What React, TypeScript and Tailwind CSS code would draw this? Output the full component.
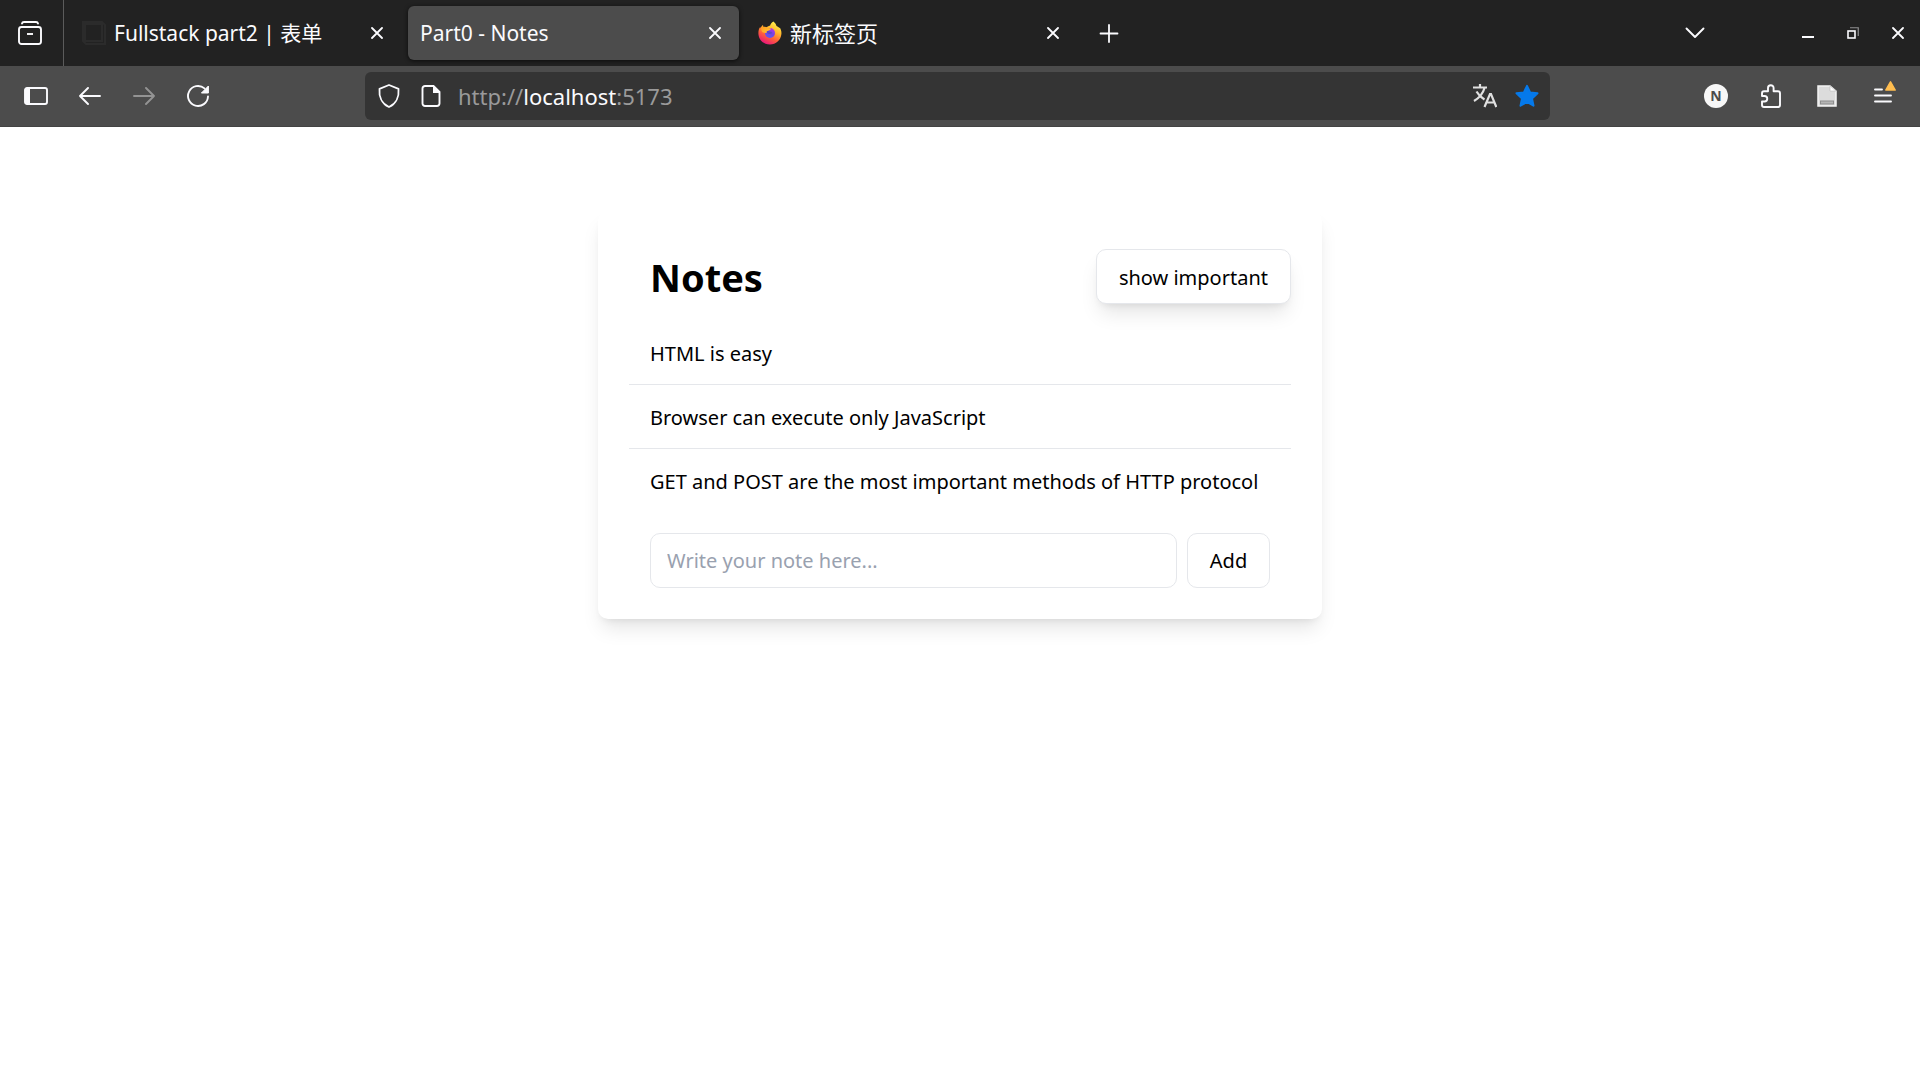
import { useState, type FormEvent, type ReactNode } from "react";

const UI = 'font-["Noto_Sans","Noto_Sans_CJK_SC",sans-serif]';

function CloseIcon() {
  return (
    <svg width="12" height="12" viewBox="0 0 12 12" fill="none" stroke="currentColor" strokeWidth="1.8" strokeLinecap="round">
      <path d="M1 1 11 11M11 1 1 11" />
    </svg>
  );
}

function FirefoxIcon() {
  return (
    <svg className="shrink-0" width="24" height="24" viewBox="0 0 24 24">
      <defs>
        <linearGradient id="flame" x1="0.8" y1="0.05" x2="0.3" y2="1">
          <stop offset="0" stopColor="#fff44f" />
          <stop offset="0.35" stopColor="#ffb52b" />
          <stop offset="0.65" stopColor="#ff5f3a" />
          <stop offset="1" stopColor="#e8117f" />
        </linearGradient>
        <linearGradient id="globe" x1="0.7" y1="0" x2="0.3" y2="1">
          <stop offset="0" stopColor="#b833e1" />
          <stop offset="0.5" stopColor="#7542e5" />
          <stop offset="1" stopColor="#5b5bf0" />
        </linearGradient>
        <linearGradient id="ear" x1="0" y1="0" x2="1" y2="1">
          <stop offset="0" stopColor="#ff9a1f" />
          <stop offset="1" stopColor="#ffc935" />
        </linearGradient>
      </defs>
      <path
        fill="url(#flame)"
        d="M15.4.4c2 1.5 2.7 3.200 3.100 4.600 1.300.4 2.300 1.300 3.100 2.300l.1-.8c1.400 2 1.900 4.200 1.700 6.500-.6 6-5.400 10.500-11.500 10.500C5.500 23.500.4 18.700.4 12.300c0-2.600.5-4.700 1.800-6.300l.2 1.300c.5-1.300 1.600-2.700 2.700-3.300-.1.8 0 1.500.3 2 1.200-.2 2.500-.1 3.500.3C9.700 5.100 11 4.800 12 4.700 12.500 2.900 13.800 1.400 15.400.4Z"
      />
      <circle cx="12" cy="12" r="5" fill="url(#globe)" />
      <path fill="url(#ear)" d="M3.500 6.200c2.600-.8 4.700-.2 6 .9.800 0 2.300.2 3.500.6-.2 1-1.800 1.600-3 2-.5.900-.7 1.500-2 2.300l-3.500-.7C3.200 9.600 2.800 7.700 3.500 6.200Z" />
      <path fill="#5a46c8" d="M8.600 10.600c1.200-.8 2.700-.5 3.400.2 1.200-.2 2 .5 2.300 1.400-1.300-.2-1.800.9-3 .9-1.400 0-2.400-1-2.700-2.500Z" />
    </svg>
  );
}

function Tab({ title, favicon, active, shown }: { title: string; favicon?: ReactNode; active?: boolean; shown: string }) {
  return (
    <div
      className={
        active
          ? "flex h-[54px] w-[331px] items-center rounded-md bg-[#4c4c4c] pl-3 pr-2.5 shadow-[0_1px_4px_rgba(0,0,0,0.7)]"
          : "flex h-[54px] w-[331px] items-center rounded-md pl-3 pr-2.5"
      }
    >
      <button type="button" role="tab" aria-selected={!!active} aria-label={title} className="flex min-w-0 flex-1 items-center gap-2 text-left">
        {favicon}
        <span className={shown}>{title}</span>
      </button>
      <button type="button" aria-label={"Close " + title} className="flex size-7 items-center justify-center">
        <CloseIcon />
      </button>
    </div>
  );
}

function BarButton({ label, className, children }: { label: string; className: string; children: ReactNode }) {
  return (
    <button type="button" aria-label={label} className={"flex shrink-0 items-center justify-center " + className}>
      {children}
    </button>
  );
}

function TabStrip() {
  return (
    <div className="flex h-[66px] items-center bg-[#222] text-[#fbfbfe]">
      <div className="flex h-full w-16 shrink-0 items-center justify-center border-r border-[#5b5b5b] pr-[3px]">
        <BarButton label="View tabs" className="size-10">
          <svg width="24" height="24" viewBox="0 0 24 24" fill="none" stroke="currentColor" strokeWidth="1.9">
            <path d="M4 2.500C4.200 1.500 4.800 1 6 1h12c1.200 0 1.800.5 2 1.500" strokeLinecap="round" />
            <rect x="1" y="6" width="22" height="17" rx="2.500" />
            <path d="M9 13h6" />
          </svg>
        </BarButton>
      </div>
      <div role="tablist" className="ml-1.5 flex gap-[7px]">
        <Tab
          title="Fullstack part2 | 表单"
          shown="text-[21px] leading-8"
          favicon={
            <svg className="shrink-0" width="24" height="24" viewBox="0 0 24 24" fill="none" stroke="#2b2b2b" strokeWidth="2">
              <path d="M1 1h19l3 3v19H4l-3-3Z" />
              <rect x="3" y="3" width="17" height="17" />
            </svg>
          }
        />
        <Tab title="Part0 - Notes" shown="text-[21px] leading-8" active />
        <Tab title="新标签页" shown="text-[22px] leading-8" favicon={<FirefoxIcon />} />
      </div>
      <BarButton label="New tab" className="ml-3 size-10">
        <svg width="20" height="20" viewBox="0 0 20 20" stroke="currentColor" strokeWidth="1.800" strokeLinecap="round">
          <path d="M10 2v17M1.500 10.500h17" />
        </svg>
      </BarButton>
      <div className="flex-1" />
      <BarButton label="List all tabs" className="mr-[63px] h-10 w-[54px]">
        <svg width="20" height="12" viewBox="0 0 20 12" fill="none" stroke="currentColor" strokeWidth="1.900" strokeLinecap="round" strokeLinejoin="round">
          <path d="M1.500 1.500 10 10l8.500-8.500" />
        </svg>
      </BarButton>
      <BarButton label="Minimize" className="h-10 w-[45px]">
        <svg width="12" height="12" viewBox="0 0 12 12" fill="currentColor">
          <path d="M0 9h12v2H0z" />
        </svg>
      </BarButton>
      <BarButton label="Restore" className="h-10 w-[45px]">
        <svg width="12" height="12" viewBox="0 0 12 12" fill="none" stroke="currentColor">
          <rect x="1" y="4" width="7" height="7" strokeWidth="1.600" />
          <path d="M3 .75h8.250V9" strokeWidth="1.200" opacity="0.5" />
        </svg>
      </BarButton>
      <BarButton label="Close window" className="h-10 w-[45px]">
        <CloseIcon />
      </BarButton>
    </div>
  );
}

function Toolbar() {
  return (
    <div className="flex h-[61px] items-center border-b border-[#434343] bg-[#4c4c4c] pl-[9px] pr-2 text-[#fbfbfe]">
      <BarButton label="Sidebar" className="h-12 w-[54px]">
        <svg width="24" height="18" viewBox="0 0 24 18">
          <rect x="1" y="1" width="22" height="16" rx="2" fill="none" stroke="currentColor" strokeWidth="1.900" />
          <path d="M1 2h5v14H1z" fill="currentColor" />
        </svg>
      </BarButton>
      <BarButton label="Back" className="h-12 w-[54px]">
        <svg width="22" height="18" viewBox="0 0 22 18" fill="none" stroke="currentColor" strokeWidth="1.900" strokeLinecap="round" strokeLinejoin="round">
          <path d="M21 9H1M9 1 1 9l8 8" />
        </svg>
      </BarButton>
      <BarButton label="Forward" className="h-12 w-[54px] text-[#939393]">
        <svg width="22" height="18" viewBox="0 0 22 18" fill="none" stroke="currentColor" strokeWidth="1.900" strokeLinecap="round" strokeLinejoin="round">
          <path d="M1 9h20M13 1l8 8-8 8" />
        </svg>
      </BarButton>
      <BarButton label="Reload" className="h-12 w-[54px]">
        <svg width="22" height="22" viewBox="0 0 22 22">
          <path d="M21 11.500A10 10 0 1 1 17.500 3.400" fill="none" stroke="currentColor" strokeWidth="1.900" strokeLinecap="round" />
          <path d="M21.400 1v7h-7Z" fill="currentColor" stroke="currentColor" strokeLinejoin="round" />
        </svg>
      </BarButton>

      <div className="ml-[140px] mr-[138px] flex h-12 min-w-0 flex-1 items-center rounded-md bg-[#343434] pl-[3px] pr-0.5">
        <BarButton label="Tracking protection" className="h-10 w-[42px]">
          <svg width="22" height="24" viewBox="0 0 22 24" fill="none" stroke="currentColor" strokeWidth="1.800" strokeLinejoin="round">
            <path d="M11 1 20.500 4.800C21.200 12 18.500 19.500 11 23 3.500 19.500.8 12 1.500 4.800Z" />
          </svg>
        </BarButton>
        <BarButton label="Site information" className="h-10 w-[42px]">
          <svg width="20" height="22" viewBox="0 0 20 22">
            <path d="M4 1h8.500L18.500 7v11.500a2.500 2.500 0 0 1-2.500 2.500H4a2.500 2.500 0 0 1-2.500-2.500v-15A2.500 2.500 0 0 1 4 1Z" fill="none" stroke="currentColor" strokeWidth="1.900" />
            <path d="M12 1v7h7Z" fill="currentColor" />
          </svg>
        </BarButton>
        <div className="min-w-0 flex-1 truncate pl-1.5 text-[22px] leading-8 text-[#9a9a9a]">
          http://<span className="text-[#fbfbfe]">localhost</span>:5173
        </div>
        <BarButton label="Translate" className="h-10 w-[42px]">
          <svg width="24" height="24" viewBox="0 0 24 24" fill="none" stroke="#e0e0e0" strokeWidth="2.200">
            <path d="M0 3.500h14M7 0v3.500M11.500 4C10 9.500 6 14 1 17M3.500 7.500c2 3.500 4.500 6 8 8" />
            <path d="M11.500 23 17 10h1l5.300 13M13.500 18.500h8" />
          </svg>
        </BarButton>
        <BarButton label="Bookmarked" className="h-10 w-[42px]">
          <svg width="24" height="24" viewBox="0 0 24 24" fill="#0579ea" stroke="#0579ea" strokeWidth="2" strokeLinejoin="round">
            <path d="m12 1.800 3.100 6.700 7.400.8-5.500 5.100 1.500 7.300-6.500-3.700-6.500 3.700 1.500-7.300L1.500 9.300l7.400-.8Z" />
          </svg>
        </BarButton>
      </div>

      <BarButton label="N" className="h-12 w-14">
        <span className="flex size-6 items-center justify-center rounded-full bg-[#f7f7f7] text-[14px] leading-none font-bold text-[#4c4c4c]">N</span>
      </BarButton>
      <BarButton label="Extensions" className="h-12 w-14">
        <svg width="24" height="24" viewBox="0 0 24 24" fill="none" stroke="currentColor" strokeWidth="1.900" strokeLinejoin="round">
          <path d="M2 12V9.500C2 8 2.700 7.300 4 7.300H8V4a2.800 2.800 0 0 1 5.600 0v3.300H18C19.400 7.300 20 8 20 9.300V21c0 1.300-.6 2-2 2H4c-1.400 0-2-.7-2-2v-3.500H4.500a2.750 2.750 0 0 0 0-5.500Z" />
        </svg>
      </BarButton>
      <BarButton label="Reader" className="h-12 w-14">
        <svg width="22" height="22" viewBox="0 0 22 22">
          <path d="M1 1h12l6 5v15H1Z" fill="#dcdcdc" stroke="#f4f4f4" strokeWidth="1.500" />
          <path d="M13 1v5h6Z" fill="#fff" stroke="#bcbcbc" strokeWidth="0.600" />
          <rect x="3.500" y="16" width="13" height="3" fill="#b5b5b5" stroke="#8d8d8d" />
        </svg>
      </BarButton>
      <BarButton label="Menu" className="h-12 w-14">
        <svg width="24" height="30" viewBox="0 0 24 30">
          <path d="M3 8.500h7M3 14.500h16M3 20.500h16" stroke="currentColor" strokeWidth="1.900" strokeLinecap="round" />
          <path d="M18.500.8 23.200 9h-9.400Z" fill="#ffbd4f" stroke="#ffbd4f" strokeWidth="1.500" strokeLinejoin="round" />
        </svg>
      </BarButton>
    </div>
  );
}

type Note = { id: number; content: string; important: boolean };

const initialNotes: Note[] = [
  { id: 1, content: "HTML is easy", important: true },
  { id: 2, content: "Browser can execute only JavaScript", important: false },
  { id: 3, content: "GET and POST are the most important methods of HTTP protocol", important: true },
];

function NotesCard() {
  const [notes, setNotes] = useState(initialNotes);
  const [showAll, setShowAll] = useState(true);
  const [draft, setDraft] = useState("");

  const addNote = (event: FormEvent) => {
    event.preventDefault();
    if (!draft.trim()) return;
    setNotes([...notes, { id: notes.length + 1, content: draft, important: false }]);
    setDraft("");
  };

  return (
    <section className="mx-auto mt-[84px] w-full max-w-[724px] rounded-[10px] bg-white px-[31px] pt-[38px] pb-[31px] text-[20px] leading-[31px] text-black shadow-[0_13px_20px_-4px_rgba(0,0,0,0.1),0_5px_8px_-5px_rgba(0,0,0,0.1)]">
      <header className="flex items-center justify-between pl-[21px]">
        <h1 className="text-[38px] leading-[54px] font-bold">Notes</h1>
        <button
          type="button"
          onClick={() => setShowAll(!showAll)}
          className="h-[55px] rounded-[10px] border border-gray-200 bg-white px-[22px] pt-px shadow-[0_13px_20px_-4px_rgba(0,0,0,0.1),0_5px_8px_-5px_rgba(0,0,0,0.1)]"
        >
          {showAll ? "show important" : "show all"}
        </button>
      </header>
      <ul className="mt-[17px] divide-y divide-gray-200">
        {notes
          .filter((note) => showAll || note.important)
          .map((note) => (
            <li key={note.id} className="px-[21px] pt-[17px] pb-[15px] whitespace-nowrap">
              {note.content}
            </li>
          ))}
      </ul>
      <form onSubmit={addNote} className="mt-[21px] flex gap-2.5 px-[21px]">
        <input
          type="text"
          aria-label="New note"
          value={draft}
          onChange={(event) => setDraft(event.target.value)}
          placeholder="Write your note here..."
          className="h-[55px] min-w-0 flex-1 rounded-[10px] border border-gray-200 px-4 placeholder:text-gray-400"
        />
        <button type="submit" className="h-[55px] w-[83px] rounded-[10px] border border-gray-200">
          Add
        </button>
      </form>
    </section>
  );
}

export default function App() {
  return (
    <div className={"flex min-h-screen flex-col bg-white " + UI}>
      <TabStrip />
      <Toolbar />
      <main className="flex-1">
        <NotesCard />
      </main>
    </div>
  );
}
